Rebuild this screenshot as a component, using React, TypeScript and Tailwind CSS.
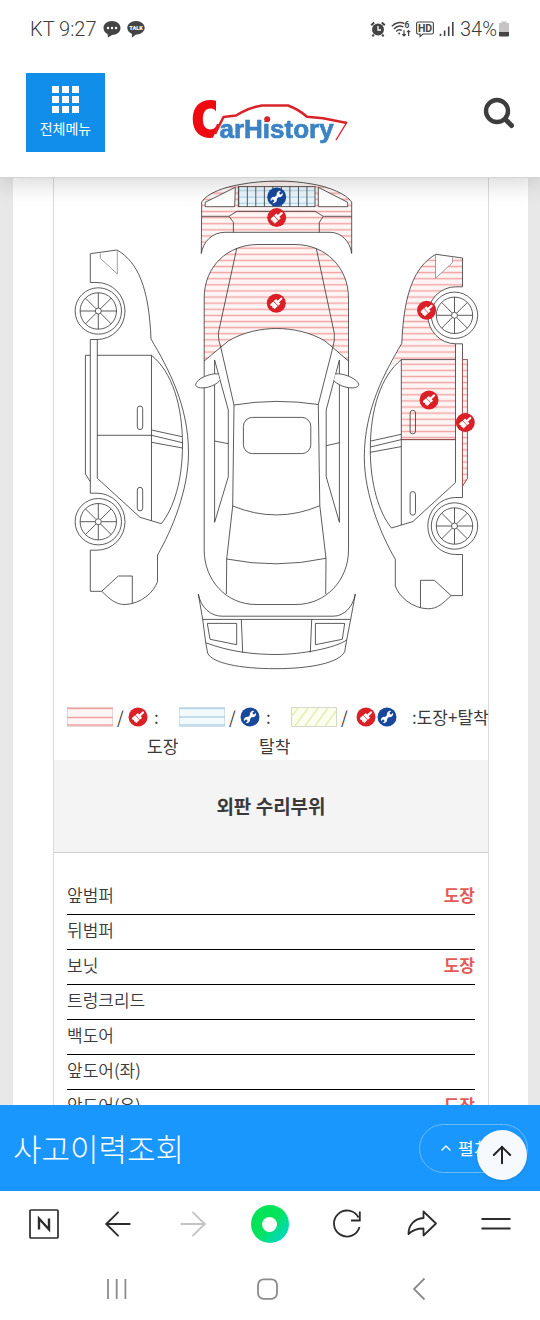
import { ArrowLeft, ArrowRight, ArrowUp, ChevronUp } from "lucide-react";

const parts = [
  { name: "앞범퍼", repair: "도장" },
  { name: "뒤범퍼", repair: "" },
  { name: "보닛", repair: "도장" },
  { name: "트렁크리드", repair: "" },
  { name: "백도어", repair: "" },
  { name: "앞도어(좌)", repair: "" },
  { name: "앞도어(우)", repair: "도장" },
];

const BrushShape = () => (
  <g>
    <circle r="9.5" fill="#db1f26" />
    <g transform="rotate(48)" fill="#fff">
      <rect x="-1.1" y="-7.8" width="2.2" height="6" rx="1.1" />
      <path d="M-3.2 -2.6H3.2V0.4H-3.2Z" />
      <path d="M-3.2 1H3.2V5.6L1.8 5L0.8 6L-0.6 5L-2 6L-3.2 5.2Z" />
    </g>
  </g>
);

const WrenchShape = () => (
  <g>
    <circle r="9.5" fill="#18479b" />
    <g transform="rotate(45)">
      <path d="M0 -3.5V3.5" stroke="#fff" strokeWidth="2.6" />
      <circle cy="-4.2" r="3" fill="#fff" />
      <circle cy="4.2" r="3" fill="#fff" />
      <path d="M-1.2 -8V-4.4H1.2V-8Z" fill="#18479b" />
      <path d="M-1.2 8V4.4H1.2V8Z" fill="#18479b" />
    </g>
  </g>
);

const BrushBadge = () => (
  <svg viewBox="-10 -10 20 20" className="h-5 w-5 shrink-0">
    <BrushShape />
  </svg>
);

const WrenchBadge = () => (
  <svg viewBox="-10 -10 20 20" className="h-5 w-5 shrink-0">
    <WrenchShape />
  </svg>
);

const Wheel = ({ cy }: { cy: number }) => (
  <g transform={`translate(98.3 ${cy})`}>
    <circle r="23.2" fill="#fff" />
    <circle r="18.2" />
    <path d="M0 -18.2V-3M0 18.2V3M-18.2 0H-3M18.2 0H3M-12.9 -12.9L-2.2 -2.2M12.9 -12.9L2.2 -2.2M-12.9 12.9L-2.2 2.2M12.9 12.9L2.2 2.2" />
    <circle r="3" fill="#fff" />
  </g>
);

// Left profile of the car, flipped for the right one
const CarSide = () => (
  <g>
    <path d="M90.3 282.5V253.7L117 250C138 262 149 288 151 339C168 368 188.5 405 188.5 453C188.5 490 172 530 157.5 555V581.7C154 592 141 604 125 604.5C115 604.5 110 599 101.7 591.3H90.3V550.2H97A28 28.5 0 0 0 97 493.2H90.3V339.5H97A28 28.5 0 0 0 97 282.5Z" />
    <path d="M100.3 253.3V258.3L117.3 274V250" stroke="#888" />
    <path d="M97.3 339.5V478.3L140 517.3L161.3 523.7C174 508 182.5 480 182.5 445C182.5 405 172 372 151.5 355.3H97.3" />
    <path d="M90.3 355.3H85.4V474L90.3 481.7" />
    <path d="M151.5 355.3V520.7M97.3 435.3H151.5" />
    <path d="M151.5 430L182 436.7M151.5 435.3L182.5 442.7M151.5 442.3L182.5 448" />
    <rect x="137.3" y="406" width="5.4" height="23.6" rx="2.7" />
    <rect x="137.3" y="487.3" width="5.4" height="23.6" rx="2.7" />
    <path d="M101.7 591.3L118.3 576H132.3V603.5" />
    <Wheel cy={311} />
    <Wheel cy={521.7} />
  </g>
);

const CarDiagram = () => (
  <svg viewBox="54 178 434 519" className="block w-full" role="img">
    <defs>
      <pattern id="paint" y="293.95" width="20" height="6.11" patternUnits="userSpaceOnUse">
        <rect width="20" height="6.11" fill="#fff5f4" />
        <rect y="2.4" width="20" height="1.4" fill="#f2a3a3" />
      </pattern>
      <pattern id="grille" x="238.3" y="186.7" width="8.52" height="6.4" patternUnits="userSpaceOnUse">
        <rect width="8.52" height="6.4" fill="#eaf6fd" />
        <rect y="3.4" width="8.52" height="1" fill="#a9cfe8" />
        <rect width="0.8" height="6.4" fill="#333" />
      </pattern>
    </defs>

    <g fill="none" stroke="#333" strokeWidth="0.8">
      {/* Front bumper */}
      <path
        d="M201.3 253.5L201.7 202C207 193 225 187 240 184.5C264 180 290 180 312 184C330 187 346 194 351.7 202V253.5C350 241 341 232.3 330 232.3H225C212 232.3 203 242 201.3 253.5Z"
        fill="url(#paint)"
      />
      <path d="M202 216.3H229L237 211.3H315L323.3 216.3H351.7M229 216.3L233.4 222.3V232.3M323.3 216.3L319.3 222.3V232.3" />
      <path d="M205.2 206.7V202.3L235.3 187.3L234.7 206.7Z" fill="#fff" />
      <path d="M318.3 206.7V187.3L347.7 202.3V206.7Z" fill="#fff" />
      <rect x="238.3" y="186.7" width="76.7" height="20" fill="url(#grille)" />

      {/* Body seen from above */}
      <path
        d="M204.2 361V298C204.2 266 228 244.5 258 244.5H295C326 244.5 348.5 268 348.5 298V361L325 341C310 332 292 328.5 276.5 328.5C262 328.5 243 332 228.3 341Z"
        fill="url(#paint)"
      />
      <path d="M204.2 361V550C204.2 580 226 604.5 256 604.5H296C326 604.5 348.5 580 348.5 550V361" />
      <path d="M236.7 248.5L218.3 333.3Q218.3 341 220.7 347L234 405M316.3 248.5L334.3 333.3Q335 341 332.7 348L318.3 404.5" />
      <path d="M234 405Q276 398 318.3 404.5L319.8 505.7Q277 524 232.7 506Z" />
      <path d="M232.7 506L226.7 559L226.4 594M319.8 505.7L326 558.3L325.7 594M226.7 559Q277 569 326 558.3" />
      <rect x="243.4" y="417.4" width="67.4" height="36.2" rx="9" />
      <path d="M214.6 360V522.3L228.3 476.7V410ZM214.6 441L228.3 443.7" />
      <path d="M339.4 360V522.3L326.2 476.7V410ZM326.2 445.7L339.4 442.7" />
      <path d="M218 374C211 372.5 196 379 195.7 384.5C195.5 390 212 389 219.8 380.7" fill="#fff" />
      <path d="M335.5 374C343 372.5 358 379 358.7 384.5C358.5 390 342 389 333.8 380.7" fill="#fff" />

      {/* Rear bumper */}
      <path d="M198.3 594L202.7 619.3L205.7 642.7L207.7 653.3C212 663 240 668.7 275 668.7C310 668.7 339 663 344.7 651.7L346.7 640L350.7 619.3L355.3 594C353 607 344 616.2 333.3 616.2H222C211 616.2 201 608 198.3 594Z" />
      <path d="M202.7 619.4H350.7M205.7 642.7C230 652 255 654.5 276 654.5C302 654.5 335 648 346.7 640" />
      <path d="M241.3 619.4L242.7 652.5M311.7 619.4L310.3 652.5" />
      <path d="M207.3 623.4H236.7V644.7L210 639.3ZM315.4 623.4H344.7L342.3 639.3L315.4 644.7Z" />

      <CarSide />

      {/* Painted panels on the right side */}
      <g stroke="none" fill="url(#paint)">
        <path d="M436 254.3L462.5 258V286.8H455.8A28 28.5 0 0 0 455.8 343.8V359.6H401.3L391 365C395 357 399 348 401.8 343.3C403.8 292.3 414.8 266.3 436 254.3Z" />
        <path d="M435.5 254.3V278.3L452.5 262.6V257.6Z" fill="#fff" />
        <rect x="401.3" y="359.6" width="54.2" height="80" />
      </g>
      <g transform="matrix(-1 0 0 1 552.8 4.3)">
        <CarSide />
      </g>
      <path d="M462.5 359.6H467.4V478.3L462.5 486Z" fill="url(#paint)" stroke="#a04545" />
      <path d="M401.3 439.6H455.5" stroke="#a04545" />
    </g>

    <g transform="translate(276.7 197)">
      <WrenchShape />
    </g>
    <g transform="translate(276.7 217.6)">
      <BrushShape />
    </g>
    <g transform="translate(276.3 303.2)">
      <BrushShape />
    </g>
    <g transform="translate(426.6 310.3)">
      <BrushShape />
    </g>
    <g transform="translate(429 400)">
      <BrushShape />
    </g>
    <g transform="translate(465.3 422.5)">
      <BrushShape />
    </g>
  </svg>
);

const StatusBar = () => (
  <div className="relative z-20 flex h-[58px] shrink-0 items-center justify-between bg-white px-[30px] font-['Roboto',sans-serif] text-[20px] text-[#3c3c3c]">
    <div className="flex items-center gap-[6px]">
      <span className="font-[350]">KT 9:27</span>
      <svg viewBox="0 0 18 18" className="h-[18px] w-[18px]">
        <path d="M9 1C13.8 1 17.5 4 17.5 8S13.8 15 9 15L5 17.6L4.6 14.2C2.2 13 0.5 10.8 0.5 8C0.5 4 4.2 1 9 1Z" fill="#444" />
        <circle cx="5" cy="8" r="1.2" fill="#fff" />
        <circle cx="9" cy="8" r="1.2" fill="#fff" />
        <circle cx="13" cy="8" r="1.2" fill="#fff" />
      </svg>
      <svg viewBox="0 0 18 18" className="h-[18px] w-[18px]">
        <path d="M9 1C13.8 1 17.7 4 17.7 7.8S13.8 14.6 9 14.6L5 17.4L5 13.9C2.2 12.8 0.3 10.6 0.3 7.8C0.3 4 4.2 1 9 1Z" fill="#444" />
        <text x="9" y="9.9" textAnchor="middle" fontSize="5.6" fontWeight="900" fill="#fff">
          TALK
        </text>
      </svg>
    </div>
    <div className="flex items-center gap-[5px]">
      <svg viewBox="0 0 16 18" className="h-[18px] w-4">
        <circle cx="8" cy="9.5" r="6" fill="#444" />
        <path d="M1.2 5.2L4.2 2.4M14.8 5.2L11.8 2.4M3.8 14.5L2.4 16.4M12.2 14.5L13.6 16.4" stroke="#444" strokeWidth="2" />
        <path d="M8 6V10H11" stroke="#fff" strokeWidth="1.3" fill="none" />
      </svg>
      <svg viewBox="0 0 20 18" className="h-[18px] w-5" fill="none" stroke="#444" strokeWidth="1.4">
        <path d="M0.8 6.4C4.4 2.4 9.6 1.6 13.4 3.6M3 9C5.6 6 9.4 5.4 12.4 7M5.2 11.4C6.8 9.8 9 9.4 10.8 10.4" />
        <circle cx="8.2" cy="13.6" r="1" fill="#444" stroke="none" />
        <path d="M13 10.2V16M11.2 14.2L13 16L14.8 14.2M17.6 16V10.6M16 12.2L17.6 10.6L19.2 12.2" strokeWidth="1.2" />
        <text x="13.4" y="8" fontSize="8.5" fontWeight="700" fill="#444" stroke="none">
          6
        </text>
      </svg>
      <svg viewBox="0 0 18 18" className="h-[18px] w-[18px]">
        <path d="M2.2 2H15.8A1.6 1.6 0 0 1 17.4 3.6V12.4A1.6 1.6 0 0 1 15.8 14H7L4 16.6V14H2.2A1.6 1.6 0 0 1 0.6 12.4V3.6A1.6 1.6 0 0 1 2.2 2Z" fill="none" stroke="#444" strokeWidth="1.1" />
        <text x="9" y="11.7" textAnchor="middle" fontSize="10.5" fontWeight="700" fill="#444">
          HD
        </text>
      </svg>
      <svg viewBox="0 0 16 18" className="h-[18px] w-4" stroke="#444" strokeWidth="1.6">
        <path d="M1.5 16V13.8M5.6 16V10.4M9.7 16V6.6M13.8 16V2" />
      </svg>
      <div className="flex items-center gap-px">
        <span className="font-[350]">34%</span>
        <svg viewBox="0 0 12 18" className="h-[18px] w-3">
          <path d="M3.5 1.5H8.5V3H11V12H1V3H3.5Z" fill="#c4c4c4" />
          <path d="M1 12H11V15.5A1 1 0 0 1 10 16.5H2A1 1 0 0 1 1 15.5Z" fill="#444" />
        </svg>
      </div>
    </div>
  </div>
);

const Logo = () => (
  <svg viewBox="0 0 160 52" className="h-[52px] w-40" role="img" aria-label="CarHistory">
    <defs>
      <clipPath id="capital">
        <path d="M0 0H26V15H24V26H29L22 42H0Z" />
      </clipPath>
    </defs>
    <text x="1" y="39" fontSize="50" fontWeight="900" fill="#ee0a10" clipPath="url(#capital)" className="font-['Inter',sans-serif]">
      C
    </text>
    <path d="M25 36L33.5 19L46 17.5Q60 9 72 7.5H98Q108 11 117 18.7L133 20.3L157 25" fill="none" stroke="#d8232a" strokeWidth="2.6" strokeLinejoin="round" />
    <path d="M157 24L146 42" stroke="#d8232a" strokeWidth="1.4" />
    <text x="29.5" y="39.5" fontSize="26" fontWeight="700" fill="#3b83c4" stroke="#3b83c4" strokeWidth="0.7" className="font-['Liberation_Sans',sans-serif]">
      arHistory
    </text>
    <rect x="74" y="18" width="7" height="5" fill="#fff" />
    <circle cx="77.2" cy="21.3" r="3" fill="#d8232a" />
  </svg>
);

const Header = () => (
  <header className="relative z-10 grid shrink-0 grid-cols-[1fr_auto_1fr] items-center border-b border-[#d4d4d4] bg-white px-[26px] pt-[15px] pb-[25px] shadow-[0_4px_24px_rgba(0,0,0,0.18)]">
    <button className="flex h-[79px] w-[79px] flex-col items-center bg-[#118eea] pt-[13px] text-white">
      <span className="grid grid-cols-3 gap-[3px]">
        {Array.from({ length: 9 }).map((_, idx) => (
          <span key={idx} className="h-[7px] w-[7px] bg-white"></span>
        ))}
      </span>
      <span className="mt-[5px] text-[14px] leading-[20px]">전체메뉴</span>
    </button>
    <a href="#" className="mt-[22px]">
      <Logo />
    </a>
    <button aria-label="검색" className="justify-self-end">
      <svg viewBox="0 0 32 32" className="h-8 w-8" fill="none" stroke="#3d3d3d" strokeLinecap="round">
        <circle cx="15" cy="14" r="11" strokeWidth="4.4" />
        <path d="M23.5 22.5L29.5 28.5" strokeWidth="5" />
      </svg>
    </button>
  </header>
);

const Legend = () => (
  <div className="flex h-[63px] pt-[9px] pl-[13px] text-[17px] leading-[22px] whitespace-nowrap">
    <div className="w-28 shrink-0">
      <div className="flex items-center">
        <svg viewBox="0 0 46 20" className="mr-1 h-5 w-[46px]">
          <rect x="0.5" y="0.5" width="45" height="19" fill="#fff6f5" stroke="#e6d6d6" />
          <path d="M0 1.5H46M0 10.5H46M0 18H46" stroke="#f0a3a3" strokeWidth="1.5" />
        </svg>
        <span className="w-[11px]">/</span>
        <BrushBadge />
        <span className="ml-[6px]">:</span>
      </div>
      <div className="mt-[7px] pl-20">도장</div>
    </div>
    <div className="w-28 shrink-0">
      <div className="flex items-center">
        <svg viewBox="0 0 46 20" className="mr-1 h-5 w-[46px]">
          <rect x="0.5" y="0.5" width="45" height="19" fill="#f2fafe" stroke="#d3dfe6" />
          <path d="M0 1.5H46M0 10H46M0 18H46" stroke="#b5d5e8" strokeWidth="1.5" />
        </svg>
        <span className="w-[11px]">/</span>
        <WrenchBadge />
        <span className="ml-[6px]">:</span>
      </div>
      <div className="mt-[7px] pl-20">탈착</div>
    </div>
    <div className="flex h-[22px] items-center">
      <svg viewBox="0 0 46 20" className="mr-1 h-5 w-[46px]">
        <rect x="0.5" y="0.5" width="45" height="19" fill="#fcfeee" stroke="#d5d8c8" />
        <path d="M1 9L7 1M4 19L17 1M14 19L27 1M24 19L37 1M34 19L45 4" stroke="#e6edb4" strokeWidth="1.4" />
      </svg>
      <span className="w-[15px]">/</span>
      <BrushBadge />
      <span className="ml-px flex">
        <WrenchBadge />
      </span>
      <span className="ml-[15px]">:도장+탈착</span>
    </div>
  </div>
);

const RepairTable = () => (
  <div className="px-[13px] pt-[27px]">
    <table className="w-full border-separate border-spacing-0 text-[17px] leading-[29px]">
      <tbody>
        {parts.map((part) => (
          <tr key={part.name}>
            <th scope="row" className="border-b border-black p-0 pb-[5px] text-left font-[350]">
              {part.name}
            </th>
            <td className="border-b border-black p-0 pb-[5px] text-right font-bold text-[#e25b57]">
              {part.repair}
            </td>
          </tr>
        ))}
      </tbody>
    </table>
  </div>
);

const BottomBar = () => (
  <div className="relative flex h-[86px] shrink-0 items-center justify-between bg-[#1a97fd] pr-3 pl-[13px] text-white">
    <h2 className="text-[31px] leading-[40px] font-light">사고이력조회</h2>
    <button className="flex h-[49px] w-[109px] items-center gap-1 rounded-full border border-[#6bbcfd] pl-[18px] text-[17px]">
      <ChevronUp className="h-4 w-4" />
      펼치기
    </button>
    <button
      aria-label="맨 위로"
      className="absolute top-[25px] right-[13px] flex h-[50px] w-[50px] items-center justify-center rounded-full bg-[#f6faff] text-[#222] shadow-sm"
    >
      <ArrowUp className="h-7 w-7" strokeWidth={1.7} />
    </button>
  </div>
);

const BrowserBar = () => (
  <nav className="flex h-[66px] shrink-0 items-center justify-between px-7 text-[#2c2c2c]">
    <button aria-label="네이버 홈" className="h-8 w-8">
      <svg viewBox="0 0 32 32" fill="none" stroke="currentColor" strokeWidth="1.7">
        <rect x="2" y="2" width="28" height="28" rx="1" />
        <path d="M11 21.5V10.5L21 21.5V10.5" strokeWidth="2.4" />
      </svg>
    </button>
    <button aria-label="뒤로" className="flex h-8 w-8 items-center justify-center">
      <ArrowLeft className="h-10 w-10 shrink-0" strokeWidth={1.1} />
    </button>
    <button aria-label="앞으로" className="flex h-8 w-8 items-center justify-center text-[#c4c4c4]">
      <ArrowRight className="h-10 w-10 shrink-0" strokeWidth={1.1} />
    </button>
    <button
      aria-label="그린닷"
      className="flex h-[38px] w-[38px] items-center justify-center rounded-full bg-linear-to-br from-[#03e35a] from-50% to-[#12d0dc]"
    >
      <span className="h-[15px] w-[15px] rounded-full bg-white"></span>
    </button>
    <button aria-label="새로고침" className="h-8 w-8">
      <svg viewBox="0 0 32 32" fill="none" stroke="currentColor" strokeWidth="1.8">
        <path d="M28.5 19A13 13 0 1 1 27.5 9.5" />
        <path d="M28.8 3.5V12.5H20" />
      </svg>
    </button>
    <button aria-label="공유" className="h-8 w-8">
      <svg viewBox="0 0 32 32" fill="none" stroke="currentColor" strokeWidth="1.8" strokeLinejoin="round">
        <path d="M17.5 3.5L30 15.5L17.5 27.5V20.5C11 20.5 6.5 22 2.5 26C2.5 17 8.5 10.5 17.5 10Z" />
      </svg>
    </button>
    <button aria-label="메뉴" className="h-8 w-8">
      <svg viewBox="0 0 32 32" stroke="currentColor" strokeWidth="1.9">
        <path d="M1.5 11H30.5M1.5 20.5H30.5" />
      </svg>
    </button>
  </nav>
);

const SystemBar = () => (
  <nav className="flex h-[63px] shrink-0 items-center justify-center gap-[120px] text-[#8c8c8c]">
    <button aria-label="최근 앱" className="h-8 w-8">
      <svg viewBox="0 0 32 32" stroke="currentColor" strokeWidth="1.8">
        <path d="M6 6V26M14.7 6V26M23.4 6V26" />
      </svg>
    </button>
    <button aria-label="홈" className="h-8 w-8">
      <svg viewBox="0 0 32 32" fill="none" stroke="currentColor" strokeWidth="1.8">
        <rect x="4" y="6.4" width="19" height="19.4" rx="5.5" />
      </svg>
    </button>
    <button aria-label="이전" className="h-8 w-8">
      <svg viewBox="0 0 32 32" fill="none" stroke="currentColor" strokeWidth="1.8">
        <path d="M18.5 5.5L8 16L18.5 26.5" />
      </svg>
    </button>
  </nav>
);

export default function App() {
  return (
    <div className="flex h-screen flex-col bg-white font-['Noto_Sans_CJK_KR',sans-serif] text-[#3a3a3a]">
      <StatusBar />
      <Header />

      <main className="min-h-0 flex-1 overflow-y-auto bg-[#e8e8e8] pr-3 pl-[13px] [scrollbar-width:none]">
        <div className="bg-white pr-[39px] pl-10">
          <section className="border-x border-[#dcdcdc]">
            <CarDiagram />
            <Legend />
            <h3 className="flex h-[93px] items-center justify-center border-b border-[#ccc] bg-[#f4f4f4] text-[19px] font-bold">
              외판 수리부위
            </h3>
            <RepairTable />
          </section>
        </div>
      </main>

      <BottomBar />
      <BrowserBar />
      <SystemBar />
    </div>
  );
}
